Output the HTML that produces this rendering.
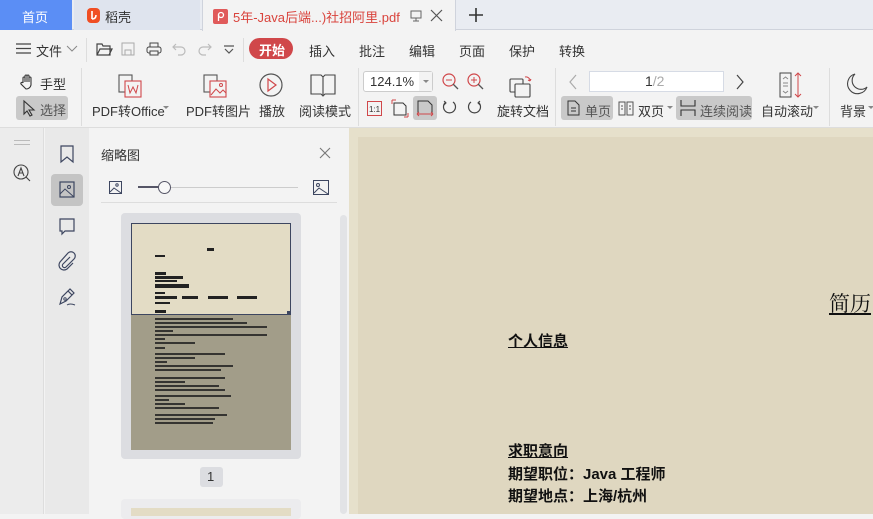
<!DOCTYPE html>
<html><head><meta charset="utf-8">
<style>
*{margin:0;padding:0;box-sizing:border-box}
body{width:873px;height:514px;overflow:hidden;position:relative;background:#f3f3f3;font-family:"Liberation Sans","Noto Sans CJK SC",sans-serif;font-size:13px;color:#333}
.a{position:absolute}
.t{position:absolute;white-space:nowrap}
svg{position:absolute;overflow:visible}
.r{position:absolute;background:#222}
</style></head><body>
<!-- tab bar -->
<div class="a" style="left:0;top:0;width:873px;height:30px;background:#e9ecf2;border-bottom:1px solid #cfd3dc"></div>
<div class="a" style="left:0;top:0;width:72px;height:30px;background:#5b8ef5"></div>
<div class="t" style="left:22px;top:7px;color:#fff;font-size:13px">首页</div>
<div class="a" style="left:74px;top:0;width:126px;height:30px;background:#dfe4ee"></div>
<div class="a" style="left:87px;top:8px;width:13px;height:15px;background:#f04e23;border-radius:4px"></div>
<svg style="left:87px;top:8px" width="13" height="15"><path d="M5 3 L5 11 M5 11 Q9 11 9 7" stroke="#fff" stroke-width="1.6" fill="none"/></svg>
<div class="t" style="left:105px;top:7px;color:#333">稻壳</div>
<div class="a" style="left:202px;top:0;width:254px;height:31px;background:#f3f3f3;border-left:1px solid #cfd3dc;border-right:1px solid #cfd3dc"></div>
<div class="a" style="left:213px;top:9px;width:15px;height:15px;background:#e05a5a;border-radius:2px"></div>
<svg style="left:213px;top:9px" width="15" height="15"><circle cx="8" cy="6" r="2.5" stroke="#fff" stroke-width="1.3" fill="none"/><path d="M5.5 6 L5.5 12" stroke="#fff" stroke-width="1.3"/></svg>
<div class="t" style="left:233px;top:7px;color:#d9433c;font-size:13px">5年-Java后端...)社招阿里.pdf</div>
<svg style="left:410px;top:10px" width="12" height="12"><rect x="1" y="1" width="10" height="7" fill="none" stroke="#666"/><path d="M6 8v3M3 11h6" stroke="#666"/></svg>
<svg style="left:431px;top:10px" width="11" height="11"><path d="M0 0L11 11M11 0L0 11" stroke="#555" stroke-width="1.2"/></svg>
<svg style="left:469px;top:8px" width="14" height="14"><path d="M7 0v14M0 7h14" stroke="#333" stroke-width="1.6"/></svg>

<!-- menu row -->
<svg style="left:16px;top:43px" width="15" height="11"><path d="M0 1h15M0 5.5h15M0 10h15" stroke="#444" stroke-width="1.2"/></svg>
<div class="t" style="left:36px;top:41px">文件</div>
<svg style="left:67px;top:46px" width="10" height="6"><path d="M0 0L5 5L10 0" stroke="#888" fill="none"/></svg>
<div class="a" style="left:86px;top:38px;width:1px;height:24px;background:#ddd"></div>
<svg style="left:96px;top:42px" width="16" height="14"><path d="M1 2h5l1 2h7v9H1z M1 13l3-6h12l-3 6" stroke="#444" fill="none" stroke-width="1.2"/></svg>
<svg style="left:121px;top:42px" width="14" height="14"><rect x="1" y="1" width="12" height="12" stroke="#aaa" fill="none"/><rect x="4" y="8" width="6" height="5" stroke="#aaa" fill="none"/></svg>
<svg style="left:146px;top:42px" width="16" height="14"><rect x="4" y="1" width="8" height="4" stroke="#444" fill="none"/><rect x="1" y="5" width="14" height="6" rx="2" stroke="#444" fill="none"/><rect x="4" y="9" width="8" height="4" stroke="#444" fill="#f3f3f3"/></svg>
<svg style="left:172px;top:43px" width="14" height="12"><path d="M4 1L1 4L4 7M1 4h8a4 4 0 0 1 0 8H6" stroke="#bbb" fill="none" stroke-width="1.2"/></svg>
<svg style="left:198px;top:43px" width="14" height="12"><path d="M10 1L13 4L10 7M13 4H5a4 4 0 0 0 0 8h3" stroke="#bbb" fill="none" stroke-width="1.2"/></svg>
<svg style="left:224px;top:46px" width="10" height="8"><path d="M0 0h10M1 3L5 7L9 3" stroke="#555" fill="none" stroke-width="1.2"/></svg>
<div class="a" style="left:243px;top:38px;width:1px;height:24px;background:#ddd"></div>
<div class="a" style="left:249px;top:38px;width:44px;height:21px;background:#d0474a;border-radius:11px"></div>
<div class="t" style="left:259px;top:40px;color:#fff;font-weight:bold">开始</div>
<div class="t" style="left:309px;top:41px">插入</div>
<div class="t" style="left:359px;top:41px">批注</div>
<div class="t" style="left:409px;top:41px">编辑</div>
<div class="t" style="left:459px;top:41px">页面</div>
<div class="t" style="left:509px;top:41px">保护</div>
<div class="t" style="left:559px;top:41px">转换</div>

<!-- toolbar -->
<svg style="left:20px;top:74px" width="14" height="16"><path d="M3 9V4a1 1 0 0 1 2 0v4V2a1 1 0 0 1 2 0v6V2a1 1 0 0 1 2 0v6V4a1 1 0 0 1 2 0v7a5 5 0 0 1-5 4H6L1 10a1 1 0 0 1 2-1" stroke="#333" fill="none" stroke-width="1.1"/></svg>
<div class="t" style="left:40px;top:74px">手型</div>
<div class="a" style="left:16px;top:96px;width:52px;height:24px;background:#c9c9c9;border-radius:3px"></div>
<svg style="left:23px;top:100px" width="12" height="16"><path d="M1 1L1 14L4 11L7 16L9 15L6 10L11 10Z" stroke="#333" fill="none" stroke-width="1.1"/></svg>
<div class="t" style="left:40px;top:100px;color:#555">选择</div>
<div class="a" style="left:81px;top:68px;width:1px;height:58px;background:#ddd"></div>
<svg style="left:118px;top:74px" width="26" height="24"><rect x="1" y="1" width="13" height="17" stroke="#555" fill="none" stroke-width="1.1"/><rect x="7" y="7" width="16" height="16" stroke="#d0474a" fill="#f3f3f3" stroke-width="1.1"/><path d="M10 11l2 8 3-6 3 6 2-8" stroke="#d0474a" fill="none"/></svg>
<div class="t" style="left:92px;top:101px">PDF转Office</div>
<svg style="left:163px;top:106px" width="6" height="4"><path d="M0 0h6L3 3z" fill="#888"/></svg>
<svg style="left:203px;top:74px" width="26" height="24"><rect x="1" y="1" width="13" height="17" stroke="#555" fill="none" stroke-width="1.1"/><rect x="7" y="7" width="16" height="16" stroke="#d0474a" fill="#f3f3f3" stroke-width="1.1"/><path d="M8 21l5-6 4 4 3-3 3 3" stroke="#d0474a" fill="none"/><circle cx="18" cy="11" r="1.5" stroke="#d0474a" fill="none"/></svg>
<div class="t" style="left:186px;top:101px">PDF转图片</div>
<svg style="left:259px;top:73px" width="24" height="24"><circle cx="12" cy="12" r="11" stroke="#555" fill="none" stroke-width="1.2"/><path d="M9 6l8 6-8 6z" stroke="#d0474a" fill="none" stroke-width="1.2"/></svg>
<div class="t" style="left:259px;top:101px">播放</div>
<svg style="left:310px;top:74px" width="26" height="22"><path d="M1 1h10l2 2 2-2h10v19H15l-2 2-2-2H1z M13 3v18" stroke="#444" fill="none" stroke-width="1.1"/></svg>
<div class="t" style="left:299px;top:101px">阅读模式</div>
<div class="a" style="left:358px;top:68px;width:1px;height:58px;background:#ddd"></div>
<div class="a" style="left:363px;top:71px;width:70px;height:21px;background:#fff;border:1px solid #ccc;border-radius:3px"></div>
<div class="t" style="left:370px;top:74px;color:#333">124.1%</div>
<div class="a" style="left:419px;top:72px;width:13px;height:19px;background:#f3f3f3"></div>
<svg style="left:423px;top:80px" width="6" height="4"><path d="M0 0h6L3 3z" fill="#888"/></svg>
<svg style="left:442px;top:73px" width="18" height="18"><circle cx="7" cy="7" r="6" stroke="#d0474a" fill="none" stroke-width="1.2"/><path d="M4 7h6" stroke="#d0474a"/><path d="M11 11l5 5" stroke="#555" stroke-width="1.3"/></svg>
<svg style="left:467px;top:73px" width="18" height="18"><circle cx="7" cy="7" r="6" stroke="#d0474a" fill="none" stroke-width="1.2"/><path d="M4 7h6M7 4v6" stroke="#d0474a"/><path d="M11 11l5 5" stroke="#555" stroke-width="1.3"/></svg>
<svg style="left:367px;top:101px" width="15" height="15"><rect x="0.5" y="0.5" width="14" height="14" stroke="#d0474a" fill="none"/><text x="7.5" y="11" font-size="8" text-anchor="middle" fill="#333" font-family="Liberation Sans">1:1</text></svg>
<svg style="left:392px;top:100px" width="16" height="17"><path d="M2 3h9l3 3v9H2z" stroke="#333" fill="none"/><path d="M0 0h4M0 0v4M16 17h-4M16 17v-4" stroke="#d0474a"/></svg>
<div class="a" style="left:413px;top:96px;width:24px;height:24px;background:#c9c9c9;border-radius:3px"></div>
<svg style="left:416px;top:100px" width="18" height="16"><path d="M2 13V1h10l4 4v8" stroke="#333" fill="none"/><path d="M1 14h16M1 14l2-2M1 14l2 2M17 14l-2-2M17 14l-2 2" stroke="#d0474a"/></svg>
<svg style="left:442px;top:100px" width="15" height="15"><path d="M4 2A6 6 0 1 0 11 2" stroke="#444" fill="none" stroke-width="1.2"/><path d="M2 1l2 2-2 2" stroke="#444" fill="none"/></svg>
<svg style="left:467px;top:100px" width="15" height="15"><path d="M11 2A6 6 0 1 1 4 2" stroke="#444" fill="none" stroke-width="1.2"/><path d="M13 1l-2 2 2 2" stroke="#444" fill="none"/></svg>
<svg style="left:509px;top:73px" width="25" height="25"><rect x="1" y="6" width="13" height="13" rx="1" stroke="#444" fill="none" stroke-width="1.1"/><rect x="6" y="11" width="15" height="13" rx="1" stroke="#444" fill="#f3f3f3" stroke-width="1.1"/><path d="M16 4a4 4 0 0 1 5 4M21 8l-2-1M21 8l1-2" stroke="#d0474a" fill="none"/></svg>
<div class="t" style="left:497px;top:101px">旋转文档</div>
<div class="a" style="left:555px;top:68px;width:1px;height:58px;background:#ddd"></div>
<svg style="left:569px;top:75px" width="8" height="14"><path d="M7 0L1 7L7 14" stroke="#aaa" fill="none" stroke-width="1.2"/></svg>
<div class="a" style="left:589px;top:71px;width:135px;height:21px;background:#fff;border:1px solid #d6dbe5"></div>
<div class="t" style="left:645px;top:73px;font-size:14px;color:#333">1<span style="color:#aaa">/2</span></div>
<svg style="left:736px;top:75px" width="8" height="14"><path d="M1 0L7 7L1 14" stroke="#444" fill="none" stroke-width="1.2"/></svg>
<div class="a" style="left:561px;top:96px;width:52px;height:24px;background:#c9c9c9;border-radius:3px"></div>
<svg style="left:567px;top:100px" width="13" height="16"><path d="M1 1h7l4 4v10H1z" stroke="#333" fill="none"/><path d="M4 8h5M4 11h5" stroke="#333"/></svg>
<div class="t" style="left:585px;top:101px;color:#555">单页</div>
<svg style="left:618px;top:100px" width="16" height="16"><path d="M1 2h6v13H1zM9 2h6v13H9z" stroke="#555" fill="none"/><path d="M3 6h2M3 9h2M11 6h2M11 9h2" stroke="#555"/></svg>
<div class="t" style="left:638px;top:101px">双页</div>
<svg style="left:667px;top:106px" width="6" height="4"><path d="M0 0h6L3 3z" fill="#888"/></svg>
<div class="a" style="left:676px;top:96px;width:76px;height:24px;background:#c9c9c9;border-radius:3px"></div>
<svg style="left:680px;top:100px" width="16" height="16"><path d="M1 0v6h14V0M1 16v-6h14v6" stroke="#333" fill="none" stroke-width="1.1"/></svg>
<div class="t" style="left:700px;top:101px;color:#555">连续阅读</div>
<svg style="left:779px;top:72px" width="24" height="26"><rect x="1" y="1" width="11" height="24" stroke="#444" fill="none"/><path d="M4 7l2.5-2 2.5 2M4 11h5M4 14h5M4 19l2.5 2 2.5-2" stroke="#888" fill="none"/><path d="M19 1v24M16 4l3-3 3 3M16 22l3 3 3-3" stroke="#d0474a" fill="none"/></svg>
<div class="t" style="left:761px;top:101px">自动滚动</div>
<svg style="left:813px;top:106px" width="6" height="4"><path d="M0 0h6L3 3z" fill="#888"/></svg>
<div class="a" style="left:829px;top:68px;width:1px;height:58px;background:#ddd"></div>
<svg style="left:846px;top:73px" width="22" height="22"><path d="M9 1A10 10 0 1 0 21 14A8 8 0 0 1 9 1z" stroke="#444" fill="none" stroke-width="1.1"/></svg>
<div class="t" style="left:840px;top:101px">背景</div>
<svg style="left:868px;top:106px" width="6" height="4"><path d="M0 0h6L3 3z" fill="#888"/></svg>
<div class="a" style="left:0;top:127px;width:873px;height:1px;background:#ddd"></div>

<!-- left strip -->
<div class="a" style="left:0;top:128px;width:44px;height:386px;background:#ececec;border-right:1px solid #ddd"></div>
<div class="a" style="left:14px;top:140px;width:16px;height:1px;background:#bbb"></div>
<div class="a" style="left:14px;top:144px;width:16px;height:1px;background:#bbb"></div>
<svg style="left:13px;top:164px" width="18" height="18"><circle cx="8" cy="8" r="7" stroke="#444" fill="none" stroke-width="1.1"/><path d="M5 12l3-8 3 8M6 9h4M13 13l4 4" stroke="#444" fill="none" stroke-width="1.1"/></svg>
<div class="a" style="left:45px;top:128px;width:44px;height:386px;background:#e9e9e9"></div>
<svg style="left:60px;top:145px" width="14" height="18"><path d="M1 1h12v16l-6-5-6 5z" stroke="#3d4660" fill="none" stroke-width="1.2"/></svg>
<div class="a" style="left:51px;top:174px;width:32px;height:32px;background:#c4c4c4;border-radius:4px"></div>
<svg style="left:59px;top:181px" width="16" height="17"><rect x="1" y="1" width="14" height="15" stroke="#3d4660" fill="none" stroke-width="1.2"/><circle cx="10" cy="6" r="1.5" stroke="#3d4660" fill="none"/><path d="M1 13l5-5 9 8" stroke="#3d4660" fill="none"/></svg>
<svg style="left:59px;top:218px" width="16" height="17"><path d="M1 1h14v12H6l-3 3v-3H1z" stroke="#3d4660" fill="none" stroke-width="1.2"/></svg>
<svg style="left:58px;top:253px" width="18" height="18"><path d="M12 4L5 11a2 2 0 0 0 3 3l8-8a4 4 0 0 0-6-6L2 9a5 5 0 0 0 7 7l6-6" stroke="#3d4660" fill="none" stroke-width="1.2"/></svg>
<svg style="left:58px;top:288px" width="18" height="18"><path d="M2 16l2-7 6-6 4 4-6 6z M10 3l2-2 4 4-2 2" stroke="#3d4660" fill="none" stroke-width="1.2"/><circle cx="7" cy="11" r="1.2" stroke="#3d4660" fill="none"/><path d="M9 17q3-2 8 0" stroke="#3d4660" fill="none"/></svg>

<!-- thumbnail panel -->
<div class="a" style="left:89px;top:128px;width:260px;height:386px;background:#f3f3f3"></div>
<div class="t" style="left:101px;top:145px;color:#333">缩略图</div>
<svg style="left:320px;top:148px" width="10" height="10"><path d="M0 0L10 10M10 0L0 10" stroke="#777" stroke-width="1.1"/></svg>
<svg style="left:109px;top:181px" width="13" height="13"><rect x="0.5" y="0.5" width="12" height="12" stroke="#3d4660" fill="none"/><circle cx="8" cy="4" r="1.2" stroke="#3d4660" fill="none"/><path d="M1 11l4-4 7 5" stroke="#3d4660" fill="none"/></svg>
<div class="a" style="left:138px;top:187px;width:160px;height:1px;background:#ccc"></div>
<div class="a" style="left:138px;top:186px;width:25px;height:2px;background:#556"></div>
<div class="a" style="left:158px;top:181px;width:13px;height:13px;border-radius:50%;background:#f8f8f8;border:1.3px solid #556"></div>
<svg style="left:313px;top:180px" width="16" height="15"><rect x="0.5" y="0.5" width="15" height="14" stroke="#3d4660" fill="none"/><circle cx="5" cy="5" r="1.5" stroke="#3d4660" fill="none"/><path d="M1 13l5-5 9 6" stroke="#3d4660" fill="none"/></svg>
<div class="a" style="left:101px;top:202px;width:236px;height:1px;background:#ddd"></div>
<div class="a" style="left:340px;top:215px;width:7px;height:299px;background:#e2e3e6;border-radius:4px"></div>
<div class="a" style="left:121px;top:213px;width:180px;height:246px;background:#dcdde1;border-radius:4px"></div>
<div class="a" style="left:131px;top:223px;width:160px;height:227px;background:#a29d89"></div>
<div class="a" style="left:131px;top:223px;width:160px;height:92px;background:#e3dcc5;border:1.5px solid #3d4660;border-bottom-width:1px"></div>
<div class="a" style="left:287px;top:311px;width:4px;height:4px;background:#3d4660"></div>
<div class="r" style="left:207px;top:248px;width:7px;height:3px"></div>
<div class="r" style="left:155px;top:255px;width:10px;height:2px"></div>
<div class="r" style="left:155px;top:272px;width:11px;height:3px"></div>
<div class="r" style="left:155px;top:276px;width:28px;height:3px"></div>
<div class="r" style="left:155px;top:280px;width:22px;height:2px"></div>
<div class="r" style="left:155px;top:284px;width:34px;height:4px"></div>
<div class="r" style="left:155px;top:292px;width:10px;height:2px"></div>
<div class="r" style="left:155px;top:296px;width:22px;height:3px"></div>
<div class="r" style="left:182px;top:296px;width:16px;height:3px"></div>
<div class="r" style="left:208px;top:296px;width:20px;height:3px"></div>
<div class="r" style="left:237px;top:296px;width:20px;height:3px"></div>
<div class="r" style="left:155px;top:302px;width:15px;height:2px"></div>
<div class="r" style="left:155px;top:310px;width:11px;height:3px"></div>
<div class="r" style="left:155px;top:318px;width:78px;height:2px;opacity:.85"></div>
<div class="r" style="left:155px;top:322px;width:92px;height:2px;opacity:.85"></div>
<div class="r" style="left:155px;top:326px;width:112px;height:2px;opacity:.85"></div>
<div class="r" style="left:155px;top:330px;width:18px;height:2px;opacity:.85"></div>
<div class="r" style="left:155px;top:334px;width:112px;height:2px;opacity:.85"></div>
<div class="r" style="left:155px;top:338px;width:10px;height:2px;opacity:.85"></div>
<div class="r" style="left:155px;top:342px;width:40px;height:2px;opacity:.85"></div>
<div class="r" style="left:155px;top:347px;width:10px;height:2px;opacity:.85"></div>
<div class="r" style="left:155px;top:353px;width:70px;height:2px;opacity:.85"></div>
<div class="r" style="left:155px;top:357px;width:40px;height:2px;opacity:.85"></div>
<div class="r" style="left:155px;top:361px;width:12px;height:2px;opacity:.85"></div>
<div class="r" style="left:155px;top:365px;width:78px;height:2px;opacity:.85"></div>
<div class="r" style="left:155px;top:369px;width:66px;height:2px;opacity:.85"></div>
<div class="r" style="left:155px;top:377px;width:70px;height:2px;opacity:.85"></div>
<div class="r" style="left:155px;top:381px;width:30px;height:2px;opacity:.85"></div>
<div class="r" style="left:155px;top:385px;width:64px;height:2px;opacity:.85"></div>
<div class="r" style="left:155px;top:389px;width:70px;height:2px;opacity:.85"></div>
<div class="r" style="left:155px;top:395px;width:76px;height:2px;opacity:.85"></div>
<div class="r" style="left:155px;top:399px;width:14px;height:2px;opacity:.85"></div>
<div class="r" style="left:155px;top:403px;width:30px;height:2px;opacity:.85"></div>
<div class="r" style="left:155px;top:407px;width:64px;height:2px;opacity:.85"></div>
<div class="r" style="left:155px;top:414px;width:72px;height:2px;opacity:.85"></div>
<div class="r" style="left:155px;top:418px;width:60px;height:2px;opacity:.85"></div>
<div class="r" style="left:155px;top:422px;width:58px;height:2px;opacity:.85"></div>
<div class="a" style="left:200px;top:467px;width:23px;height:20px;background:#dcdde1;border-radius:3px"></div>
<div class="t" style="left:207px;top:469px;color:#333">1</div>
<div class="a" style="left:121px;top:499px;width:180px;height:20px;background:#ececee;border-radius:4px"></div>
<div class="a" style="left:131px;top:508px;width:160px;height:8px;background:#e3dcc5"></div>

<!-- document -->
<div class="a" style="left:349px;top:128px;width:524px;height:386px;background:#e6e0cb"></div>
<div class="a" style="left:358px;top:137px;width:515px;height:377px;background:#dfd7c0"></div>
<div class="t" style="left:829px;top:288px;font-size:21px;color:#111;text-decoration:underline;font-family:'Noto Serif CJK SC',serif">简历</div>
<div class="t" style="left:508px;top:330px;font-size:15px;font-weight:bold;color:#111;text-decoration:underline">个人信息</div>
<div class="t" style="left:508px;top:440px;font-size:15px;font-weight:bold;color:#111;text-decoration:underline">求职意向</div>
<div class="t" style="left:508px;top:463px;font-size:15px;font-weight:bold;color:#111">期望职位：Java 工程师</div>
<div class="t" style="left:508px;top:485px;font-size:15px;font-weight:bold;color:#111">期望地点：上海/杭州</div>
</body></html>
